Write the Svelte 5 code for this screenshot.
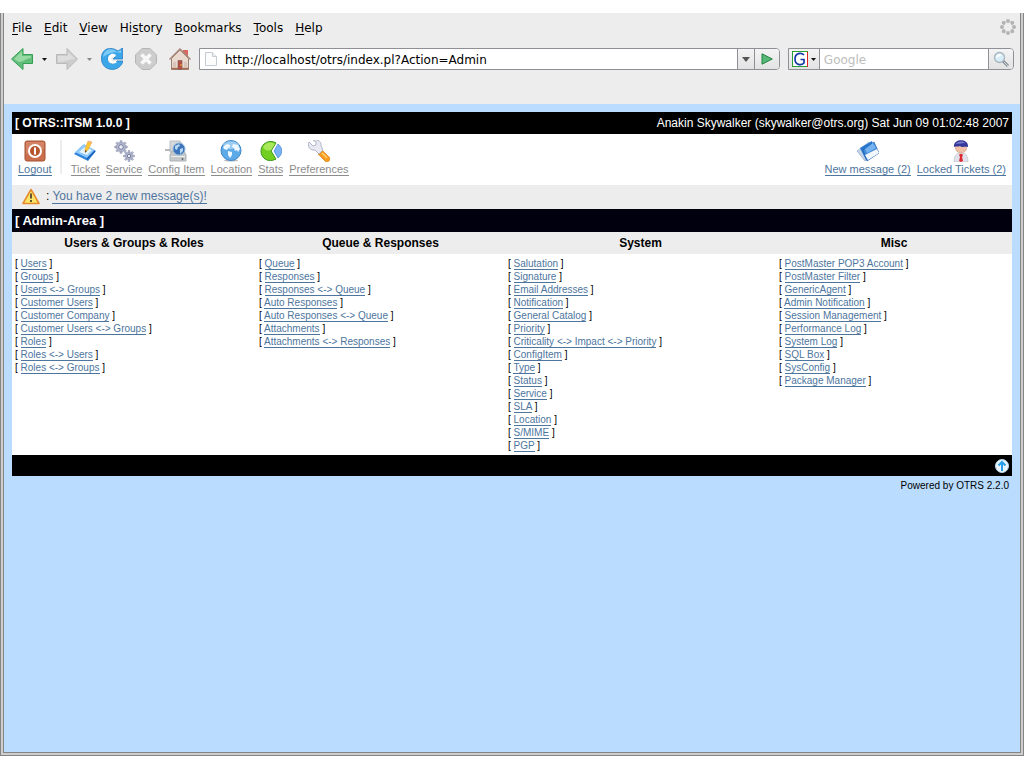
<script>
  const menus = [
    ['', 'F', 'ile'],
    ['', 'E', 'dit'],
    ['', 'V', 'iew'],
    ['Hi', 's', 'tory'],
    ['', 'B', 'ookmarks'],
    ['', 'T', 'ools'],
    ['', 'H', 'elp']
  ];

  const modules = ['Ticket', 'Service', 'Config Item', 'Location', 'Stats', 'Preferences'];

  const groups = [
    {
      title: 'Users & Groups & Roles',
      links: ['Users', 'Groups', 'Users <-> Groups', 'Customer Users', 'Customer Company', 'Customer Users <-> Groups', 'Roles', 'Roles <-> Users', 'Roles <-> Groups']
    },
    {
      title: 'Queue & Responses',
      links: ['Queue', 'Responses', 'Responses <-> Queue', 'Auto Responses', 'Auto Responses <-> Queue', 'Attachments', 'Attachments <-> Responses']
    },
    {
      title: 'System',
      links: ['Salutation', 'Signature', 'Email Addresses', 'Notification', 'General Catalog', 'Priority', 'Criticality <-> Impact <-> Priority', 'ConfigItem', 'Type', 'Status', 'Service', 'SLA', 'Location', 'S/MIME', 'PGP']
    },
    {
      title: 'Misc',
      links: ['PostMaster POP3 Account', 'PostMaster Filter', 'GenericAgent', 'Admin Notification', 'Session Management', 'Performance Log', 'System Log', 'SQL Box', 'SysConfig', 'Package Manager']
    }
  ];

  const gearTeeth = [0, 45, 90, 135, 180, 225, 270, 315];
  let url = $state('http://localhost/otrs/index.pl?Action=Admin');
  let query = $state('');
</script>

{#snippet icon(name)}
  <svg class="icon" viewBox="0 0 22 22" aria-hidden="true">
    {#if name === 'Logout'}
      <rect x="1" y="1" width="20" height="20" rx="2" fill="#c96f4e" stroke="#a5512f" />
      <path d="M2 2h18v7L2 14z" fill="#d98d70" opacity=".7" />
      <circle cx="11" cy="11" r="6" fill="#b7552f" stroke="#fff" stroke-width="2" />
      <path d="M11 7.500v7" stroke="#fff" stroke-width="2" />
    {:else if name === 'Ticket'}
      <path d="M0 14l9-9 13 6-8 10z" fill="#2f83da" />
      <path d="M1 12l9-8 11 6-8 8z" fill="#8fc8fa" />
      <path d="M5 12l6-5 7 3-5 5z" fill="#e3f4fe" />
      <path d="M13 18l8-8v2l-8 8z" fill="#1760b5" />
      <path d="M11 12l0-3 3-8 4 1-4 8z" fill="#fbc634" stroke="#e3a33a" stroke-width=".5" />
      <path d="M14 1l4 1 0 1-4-1z" fill="#f3a7a0" />
      <path d="M11 10l2 1-2 2z" fill="#75502e" />
    {:else if name === 'Service'}
      <g stroke="#9297b3" stroke-width=".7" fill="#b4bad1">
        {#each gearTeeth as angle}
          <path d="M7 0.800v4h2v-4z" transform="rotate({angle} 8 7)" />
        {/each}
        <circle cx="8" cy="7" r="4.500" />
        {#each gearTeeth as angle}
          <path d="M15.200 10.500v3h1.600v-3z" transform="rotate({angle} 16 16)" />
        {/each}
        <circle cx="16" cy="16" r="3.500" />
      </g>
      <circle cx="8" cy="7" r="2.300" fill="#edf0f7" stroke="#777d9c" />
      <circle cx="16" cy="16" r="1.700" fill="#edf0f7" stroke="#777d9c" />
    {:else if name === 'Config Item'}
      <path d="M5 1h10l2 3v8H5z" fill="#d6d8d9" stroke="#bcc0c1" />
      <path d="M0 9h6v2H0z" fill="#b7babc" />
      <path d="M5 15l2-4h12l2 4v6H5z" fill="#c5c8c9" stroke="#adb1b3" />
      <path d="M6 16h14v1H6z" fill="#eceeee" />
      <circle cx="17.500" cy="19" r="1" fill="#5e696e" />
      <circle cx="14" cy="9" r="6" fill="#3d75bb" stroke="#8eb5dc" />
      <path d="M10 6l4-2 1 2-2 1-1 3-2-1zM15 9l3-1v3l-3 3z" fill="#b9daf5" />
    {:else if name === 'Location'}
      <ellipse cx="11" cy="20.500" rx="7" ry="1" fill="#bbb" />
      <circle cx="11" cy="10.500" r="10" fill="#5daae8" stroke="#3d86c6" />
      <path d="M3 5c4-5 12-5 16 0-4 5-12 6-16 0z" fill="#b6dcf8" opacity=".7" />
      <path d="M3 7l4-3 3 1 0 2-2 1-1 2-3-1zM8 11l4 1 0 3-2 3-2-3zM13 4l5 1 2 4-2 3-1-2-2 1-1-3-2-1z" fill="#eff8fe" />
    {:else if name === 'Stats'}
      <path d="M11 11l5-8C10-1 1 3 1 11s8 12 15 8z" fill="#72cf22" stroke="#3b991c" />
      <path d="M3 7c3-6 9-5 12-3l-4 6c-3 1-6 1-8-3z" fill="#b6ee66" opacity=".8" />
      <path d="M14 11l4-7c5 4 5 10 0 14z" fill="#79b4f6" stroke="#3c7fd5" stroke-width=".7" />
    {:else if name === 'Preferences'}
      <path d="M10 14l4-4 8 8c0 3-2 4-4 4z" fill="#f89b1c" stroke="#d88421" stroke-width=".7" />
      <path d="M14 13l5 5" stroke="#ffd276" stroke-width="1.500" />
      <path d="M1 2l4 4 3-1 0-3-3-2c5-1 9 2 8 6l2 4-4 4-4-4c-5 1-8-4-6-8z" fill="#e8eaf3" stroke="#a1a4b8" stroke-width=".8" />
    {:else if name === 'New message'}
      <path d="M0 11l12-9 5 12-9 7z" fill="#c4d4e7" stroke="#8ba8ca" stroke-width=".7" />
      <path d="M3 8l12-7 3 11-9 8z" fill="#2777cf" />
      <path d="M6 10l11-8 5 11-12 8z" fill="#438cda" stroke="#2461ad" stroke-width=".7" />
      <path d="M8 15l12-6 2 4-11 7z" fill="#f2f7fd" />
      <path d="M8 9l8-6 3 5-9 5z" fill="#75b2ef" />
    {:else if name === 'Locked Tickets'}
      <path d="M4 22c0-6 2-9 7-9s7 3 7 9z" fill="#e0e1ea" stroke="#bbbac5" stroke-width=".6" />
      <path d="M10 14h2l1 1-1 2 1 4-2 1-2-1 1-4-1-2z" fill="#dd2930" />
      <ellipse cx="11" cy="8" rx="5.500" ry="5" fill="#efc0a6" stroke="#cd9482" stroke-width=".6" />
      <path d="M4 7c-1-9 15-9 14 0-3-1-6 1-8-1-2 1-4 0-6 1z" fill="#35379a" />
      <path d="M6 4c2-3 7-3 9-1-3 0-5 1-9 1z" fill="#767bc8" />
    {/if}
  </svg>
{/snippet}

<div class="window">
  <header class="chrome">
    <div class="menu-row">
      <nav class="menus" aria-label="Application menu">
        {#each menus as [before, key, after]}
          <button class="menu">{before}<u>{key}</u>{after}</button>
        {/each}
      </nav>
      <svg class="throbber" viewBox="0 0 16 16" aria-hidden="true">
        {#each gearTeeth as angle}
          <circle cx="8" cy="2" r="2" fill="#b4b4b4" transform="rotate({angle} 8 8)" />
        {/each}
      </svg>
    </div>

    <div class="toolbar">
      <div class="buttons">
        <button class="tool back" aria-label="Back">
          <svg viewBox="0 0 22 22"><path d="M.500 11L12 .500v6h9.500v9H12v6z" fill="#61bd79" stroke="#35a053" /><path d="M3 11l8-8v5h9v2c-5 0-7 4-12 4z" fill="#a4e0ac" opacity=".8" /></svg>
        </button>
        <button class="drop" aria-label="Back history"><svg viewBox="0 0 5 3"><path d="M0 0h5L2.500 3z" fill="#111" /></svg></button>
        <button class="tool" aria-label="Forward">
          <svg viewBox="0 0 22 22"><path d="M21.500 11L11 .500v6H.500v9H11v6z" fill="#cdcdcd" stroke="#b9b9b9" /><path d="M2 8h10V4l7 7c-6 0-10 3-17 3z" fill="#dedede" /></svg>
        </button>
        <button class="drop" aria-label="Forward history"><svg viewBox="0 0 5 3"><path d="M0 0h5L2.500 3z" fill="#888" /></svg></button>
        <button class="tool" aria-label="Reload">
          <svg viewBox="0 0 22 22"><path d="M17 3l4.500-3v11H12l3-3c-4-3-8 0-8 3 0 5 6 6 9 2h6c-3 12-21 11-21.500-2C0 0 10-2 17 3z" fill="#3ba6e8" stroke="#277fc3" stroke-width=".8" /><path d="M2 9c1-8 9-10 14-5l4-2v3c-6-2-12 0-18 4z" fill="#8dd3f8" opacity=".8" /><path d="M15 7c-4-3-8 0-8 4 0 5 6 6 9 3l-2-1c-2 1-4 0-4-2s2-3 4-2z" fill="#fff" /></svg>
        </button>
        <button class="tool" aria-label="Stop">
          <svg viewBox="0 0 22 22"><path d="M7 .500h8l6.500 6.500v8L15 21.500H7L.500 15V7z" fill="#cdcdcd" stroke="#b5b5b5" /><path d="M6.500 6.500l9 9M15.500 6.500l-9 9" stroke="#f8f8f8" stroke-width="3.500" /></svg>
        </button>
        <button class="tool" aria-label="Home">
          <svg viewBox="0 0 22 22"><path d="M14 2h5v8h-5z" fill="#d9675e" /><path d="M2.500 10.500L11 2l8.500 8.500v11h-17z" fill="#ead9cf" stroke="#9b8174" /><path d="M.500 11.500L11 1l10.500 10.500" fill="none" stroke="#a88b7d" stroke-width="1.500" /><path d="M9 12.500h4v9H9z" fill="#b94d42" stroke="#80655a" stroke-width=".7" /><circle cx="12" cy="17" r=".8" fill="#f8c931" /><path d="M4 14h3v5H4zM15 14h3v5h-3z" fill="#dac4b9" /><path d="M2 20.500h7M13 20.500h7" stroke="#a96e57" stroke-width="1.500" /></svg>
        </button>
      </div>

      <div class="field location">
        <svg class="page-icon" viewBox="0 0 12 14" aria-hidden="true"><path d="M.500.500h7l4 4v9H.500z" fill="#fcfcfd" stroke="#c5ccd6" /><path d="M7.500.500v4h4" fill="#eef1f4" stroke="#c5ccd6" /></svg>
        <input aria-label="Address" bind:value={url} />
        <button class="cell narrow" aria-label="Show addresses"><svg width="8" height="5" viewBox="0 0 8 5"><path d="M0 0h8L4 5z" fill="#555" /></svg></button>
        <button class="cell" aria-label="Go"><svg width="12" height="12" viewBox="0 0 12 12"><path d="M1 .800L11.300 6 1 11.200z" fill="#56b877" stroke="#248443" /></svg></button>
      </div>

      <div class="field search">
        <button class="engine" aria-label="Search engine: Google">
          <svg width="16" height="16" viewBox="0 0 16 16"><path d="M0 0h16v16H0z" fill="#fff" /><path d="M0 .500h16M.500 0v16" stroke="#2a9d35" /><path d="M15.500 1v15" stroke="#e01f1f" /><path d="M0 15.500h15" stroke="#2a9d35" /><path d="M12 4C9 1 3 2 3 8s6 7 9 4V8.500H8.500" fill="none" stroke="#1538a8" stroke-width="1.700" /></svg>
          <svg width="5" height="3" viewBox="0 0 5 3"><path d="M0 0h5L2.500 3z" fill="#111" /></svg>
        </button>
        <input aria-label="Search" placeholder="Google" bind:value={query} />
        <button class="cell" aria-label="Search"><svg width="17" height="17" viewBox="0 0 17 17"><path d="M10 10l5 5" stroke="#878e95" stroke-width="3" /><path d="M11 11l4 4" stroke="#d7dcdf" /><circle cx="6.500" cy="6.500" r="5" fill="#d9edf8" stroke="#a8b6c0" stroke-width="1.300" /><path d="M3 7c0-3 3-5 6-3z" fill="#fff" /></svg></button>
      </div>
    </div>
  </header>

  <main class="page">
    <div class="bar title-bar">
      <h1>[ OTRS::ITSM 1.0.0 ]</h1>
      <span>Anakin Skywalker (skywalker@otrs.org) Sat Jun 09 01:02:48 2007</span>
    </div>

    <nav class="modules" aria-label="Modules">
      <a class="module active" href="#logout">{@render icon('Logout')}<span>Logout</span></a>
      <div class="divider"></div>
      {#each modules as name}
        <a class="module" href="#{name}">{@render icon(name)}<span>{name}</span></a>
      {/each}
      <div class="spacer"></div>
      <a class="module active" href="#messages">{@render icon('New message')}<span>New message (2)</span></a>
      <a class="module active" href="#locked">{@render icon('Locked Tickets')}<span>Locked Tickets (2)</span></a>
    </nav>

    <div class="notice">
      <svg class="warning" viewBox="0 0 18 17" aria-hidden="true"><path d="M9 1.500L17 15.500H1z" fill="#fbe66a" stroke="#e58b2c" stroke-width="1.600" stroke-linejoin="round" /><path d="M9 5.500v5M9 12v2" stroke="#3c3420" stroke-width="1.600" /></svg>
      <span>: <a href="#messages">You have 2 new message(s)!</a></span>
    </div>

    <h2 class="bar area-bar">[ Admin-Area ]</h2>

    <div class="groups">
      {#each groups as group}
        <section>
          <h3>{group.title}</h3>
          <ul>
            {#each group.links as link}
              <li>[ <a href="#{link}">{link}</a> ]</li>
            {/each}
          </ul>
        </section>
      {/each}
    </div>

    <div class="bar footer-bar">
      <a href="#top" aria-label="Top of page">
        <svg viewBox="0 0 14 14"><circle cx="7" cy="7" r="6.500" fill="#eaf5fd" stroke="#b7d9ef" /><path d="M7 12V3.500M3.500 6.500L7 3l3.500 3.500" fill="none" stroke="#259de8" stroke-width="2" /></svg>
      </a>
    </div>
    <footer>Powered by OTRS 2.2.0</footer>
  </main>
</div>

<style>
  :global(body) {
    background: #fff;
  }

  .window {
    box-sizing: border-box;
    min-height: calc(100vh - 25px);
    margin-top: 13px;
    margin-bottom: 12px;
    padding: 0 2px 2px;
    display: flex;
    flex-direction: column;
    background: #cecece;
    border: 1px solid #858585;
    border-top: 0;
    font-family: "Liberation Sans", Arial, sans-serif;
    color: #000;
  }

  button {
    margin: 0;
    padding: 0;
    border: 0;
    background: none;
    color: inherit;
    font: inherit;
  }

  svg {
    display: block;
    flex: none;
  }

  .chrome {
    height: 91px;
    background: #ededed;
    border: solid #858585;
    border-width: 0 1px;
    font: 12px/16px "DejaVu Sans", sans-serif;
  }

  .menu-row {
    display: flex;
    justify-content: space-between;
    padding: 6px 4px 0 8px;
    height: 29px;
    box-sizing: border-box;
  }

  .menus {
    display: flex;
    gap: 12px;
    height: 17px;
  }

  u {
    text-underline-offset: 2px;
  }

  .throbber {
    width: 16px;
    height: 16px;
  }

  .toolbar {
    display: flex;
    align-items: center;
    gap: 8px;
    height: 34px;
    padding: 0 6px 0 7px;
  }

  .buttons {
    display: flex;
    align-items: center;
    gap: 12px;
  }

  .tool svg {
    width: 22px;
    height: 22px;
  }

  .drop {
    margin: 0 -3px;
  }

  .drop svg {
    width: 5px;
    height: 3px;
  }

  .field {
    box-sizing: border-box;
    display: flex;
    align-items: stretch;
    height: 22px;
    background: #fff;
    border: 1px solid #8f8f96;
    border-radius: 0 4px 4px 0;
    overflow: hidden;
  }

  .location {
    flex: 581;
  }

  .search {
    flex: 225;
  }

  .page-icon {
    width: 12px;
    height: 14px;
    align-self: center;
    margin: 0 8px 0 5px;
  }

  input {
    flex: 1;
    min-width: 0;
    padding: 1px 0 0;
    border: 0;
    outline: 0;
    background: #fff;
    color: #000;
    font: inherit;
  }

  .search input {
    padding-left: 4px;
  }

  input::placeholder {
    color: #bdbdbd;
    opacity: 1;
  }

  .cell,
  .engine {
    display: flex;
    align-items: center;
    justify-content: center;
    background: linear-gradient(#f4f4f4, #e2e2e2);
  }

  .cell {
    width: 25px;
    border-left: 1px solid #8f8f96;
  }

  .narrow {
    width: 17px;
  }

  .engine {
    width: 31px;
    gap: 3px;
    border-right: 1px solid #8f8f96;
  }

  .page {
    flex: 1;
    padding: 8px 8px 0;
    background: #baddff;
    border: solid #858585;
    border-width: 0 1px 1px;
  }

  .bar {
    display: flex;
    align-items: center;
    justify-content: space-between;
    box-sizing: border-box;
    padding: 0 3px;
    background: #000;
    color: #fff;
    font-size: 12px;
  }

  .title-bar {
    height: 22px;
  }

  h1,
  h2,
  h3 {
    margin: 0;
    font-size: 12px;
    font-weight: bold;
  }

  .modules {
    display: flex;
    align-items: flex-start;
    gap: 6px;
    box-sizing: border-box;
    height: 51px;
    padding: 6px 6px 0;
    background: #fff;
  }

  .module {
    display: flex;
    flex-direction: column;
    align-items: center;
    color: #8c8c8c;
    font-size: 11px;
    line-height: 12px;
    text-decoration: none;
  }

  .module span {
    margin-top: 1px;
    border-bottom: 1px solid;
    white-space: nowrap;
  }

  .module.active,
  .notice a,
  li a {
    color: #4d759e;
  }

  .icon {
    width: 22px;
    height: 22px;
  }

  .divider {
    width: 2px;
    height: 34px;
    margin: 0 3px 0 2px;
    background: #ededed;
  }

  .spacer {
    flex: 1;
  }

  .notice {
    display: flex;
    align-items: center;
    gap: 6px;
    box-sizing: border-box;
    height: 24px;
    padding: 0 0 2px 10px;
    background: #ededed;
    font-size: 12px;
    line-height: 13px;
  }

  .warning {
    width: 18px;
    height: 17px;
  }

  .notice a,
  li a {
    border-bottom: 1px solid;
    text-decoration: none;
  }

  .area-bar {
    height: 23px;
    background: #00000f;
    font-size: 13px;
  }

  .groups {
    display: grid;
    grid-template-columns: 244fr 249fr 271fr 236fr;
    background: #fff;
  }

  h3 {
    background: #ededed;
    text-align: center;
    line-height: 22px;
  }

  ul {
    margin: 0;
    padding: 3px;
    list-style: none;
    font-size: 10px;
    line-height: 13px;
  }

  .footer-bar {
    height: 21px;
    justify-content: flex-end;
  }

  .footer-bar svg {
    width: 14px;
    height: 14px;
  }

  footer {
    padding: 3px;
    text-align: right;
    font-size: 10px;
    line-height: 13px;
  }
</style>
